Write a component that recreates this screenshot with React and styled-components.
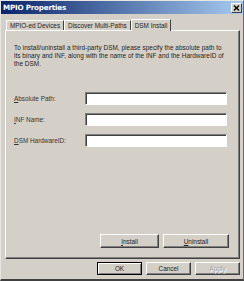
import React from 'react';
import styled, { createGlobalStyle } from 'styled-components';

const Global = createGlobalStyle`
  body { margin: 0; background: #d4d0c8; }
`;

const Win = styled.div`
  width: 244px;
  height: 281px;
  box-sizing: border-box;
  background: #d4d0c8;
  border-left: 1px solid #e8e6e0;
  border-top: 1px solid #e8e6e0;
  border-right: 1px solid #6a6a6a;
  border-bottom: 2px solid #404040;
  font-family: "Liberation Sans", Arial, sans-serif;
  font-size: 6.4px;
  color: #000;
  display: flex;
  flex-direction: column;
`;

const TitleBar = styled.div`
  height: 13px;
  background: linear-gradient(to right, #0a246a, #a6caf0);
  display: flex;
  align-items: center;
  justify-content: space-between;
  padding: 0 1px 0 2px;
`;

const Title = styled.span`
  color: #fff;
  font-weight: bold;
  font-size: 7.2px;
  font-family: "DejaVu Sans", sans-serif;
  letter-spacing: -0.2px;
`;

const CloseBtn = styled.div`
  width: 9px;
  height: 8px;
  background: #d4d0c8;
  border: 1px solid;
  border-color: #fff #404040 #404040 #fff;
  display: flex;
  align-items: center;
  justify-content: center;
`;

const Body = styled.div`
  flex: 1;
  display: flex;
  flex-direction: column;
  padding: 4px 3px 0 4px;
`;

const Tabs = styled.div`
  display: flex;
  align-items: flex-end;
  padding-left: 1px;
  height: 12px;
`;

const Tab = styled.div`
  height: ${p => (p.$active ? '12px' : '10px')};
  box-sizing: border-box;
  padding: 0 3px;
  margin: ${p => (p.$active ? '0 -1px -1px 0' : '0')};
  background: #d4d0c8;
  border-top: 1px solid #fff;
  border-left: 1px solid #fff;
  border-right: 1px solid #404040;
  display: flex;
  align-items: center;
  white-space: nowrap;
  position: relative;
  z-index: ${p => (p.$active ? 2 : 1)};
  color: #222;
`;

const Panel = styled.div`
  height: 229px;
  box-sizing: border-box;
  border: 1px solid;
  border-color: #fff #404040 #404040 #fff;
  box-shadow: inset -1px -1px 0 #808080;
  display: flex;
  flex-direction: column;
  padding: 13px 10px 10px 8px;
`;

const Intro = styled.p`
  margin: 0 0 24px 0;
  line-height: 8px;
  color: #222;
  white-space: nowrap;
  letter-spacing: 0.05px;
`;

const Row = styled.div`
  display: flex;
  align-items: center;
  height: 13px;
  margin-bottom: 8px;
`;

const Label = styled.label`
  width: 71px;
  color: #333;
`;

const Input = styled.div`
  width: 142px;
  height: 13px;
  box-sizing: border-box;
  background: #fff;
  border: 1px solid;
  border-color: #808080 #fff #fff #808080;
  box-shadow: inset 1px 1px 0 #404040;
`;

const Spacer = styled.div`
  flex: 1;
`;

const BtnRow = styled.div`
  display: flex;
  justify-content: flex-end;
  gap: 4px;
`;

const Button = styled.div`
  width: ${p => p.$w}px;
  height: ${p => p.$h || 14}px;
  box-sizing: border-box;
  background: #d4d0c8;
  border: 1px solid;
  border-color: ${p => (p.$default ? '#000' : '#fff #404040 #404040 #fff')};
  box-shadow: ${p =>
    p.$default ? 'inset 1px 1px 0 #fff, inset -1px -1px 0 #808080' : 'inset -1px -1px 0 #808080'};
  display: flex;
  align-items: center;
  justify-content: center;
  color: ${p => (p.$disabled ? '#a0a0a0' : '#222')};
  text-shadow: ${p => (p.$disabled ? '1px 1px 0 #fff' : 'none')};
`;

const Footer = styled.div`
  display: flex;
  justify-content: flex-end;
  gap: 4px;
  padding: 3px 0 0 0;
`;

const U = styled.span`
  text-decoration: underline;
`;

export default function App() {
  return (
    <>
      <Global />
      <Win>
        <TitleBar>
          <Title>MPIO Properties</Title>
          <CloseBtn>
            <svg width="7" height="6" viewBox="0 0 7 6">
              <path d="M1 0.5 L6 5.5 M6 0.5 L1 5.5" stroke="#000" strokeWidth="1.4" />
            </svg>
          </CloseBtn>
        </TitleBar>
        <Body>
          <Tabs>
            <Tab>MPIO-ed Devices</Tab>
            <Tab>Discover Multi-Paths</Tab>
            <Tab $active>DSM Install</Tab>
          </Tabs>
          <Panel>
            <Intro>
              To install/uninstall a third-party DSM, please specify the absolute path to
              <br />
              its binary and INF, along with the name of the INF and the HardwareID of
              <br />
              the DSM.
            </Intro>
            <Row>
              <Label><U>A</U>bsolute Path:</Label>
              <Input />
            </Row>
            <Row>
              <Label><U>I</U>NF Name:</Label>
              <Input />
            </Row>
            <Row>
              <Label><U>D</U>SM HardwareID:</Label>
              <Input />
            </Row>
            <Spacer />
            <BtnRow>
              <Button $w={59}><U>I</U>nstall</Button>
              <Button $w={66}><U>U</U>ninstall</Button>
            </BtnRow>
          </Panel>
          <Footer>
            <Button $w={45} $h={13} $default>OK</Button>
            <Button $w={45} $h={13}>Cancel</Button>
            <Button $w={45} $h={13} $disabled>Apply</Button>
          </Footer>
        </Body>
      </Win>
    </>
  );
}
